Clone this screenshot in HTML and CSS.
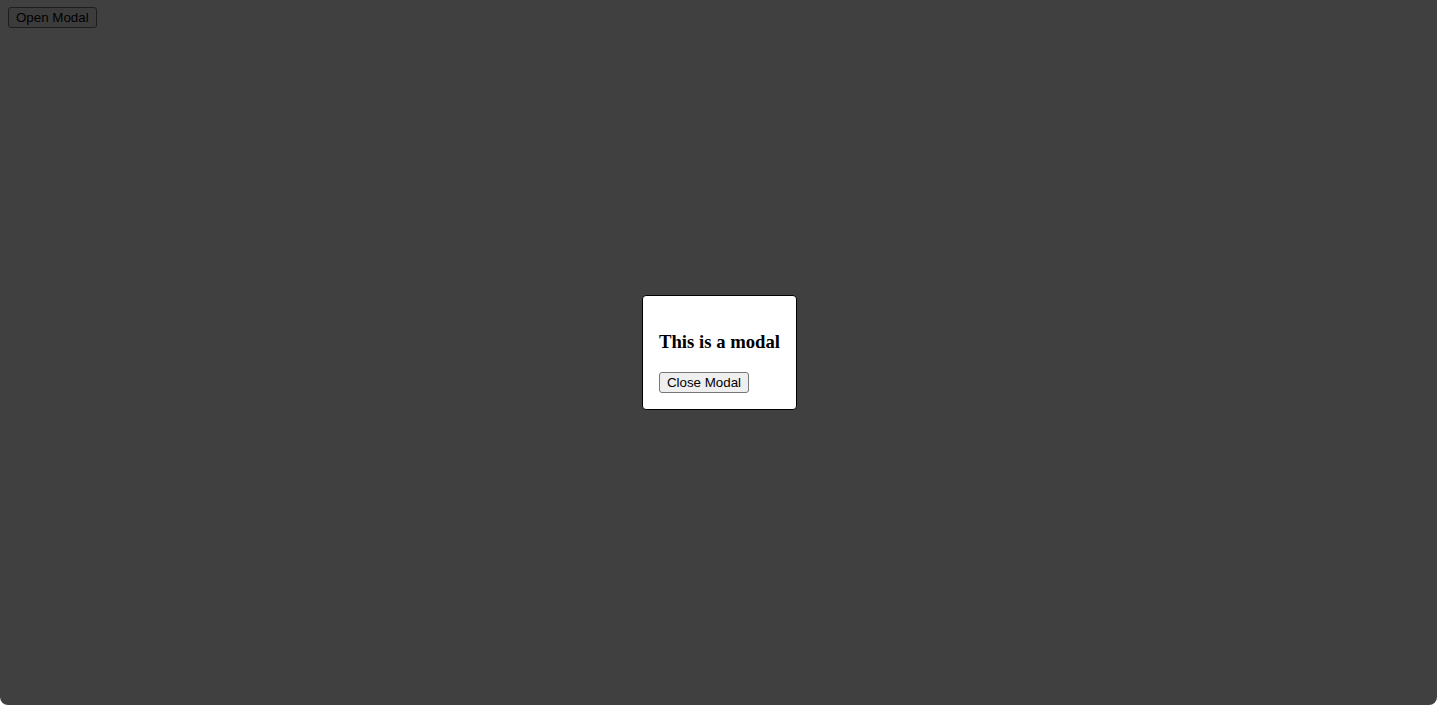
FILE: index.html
```html
<!DOCTYPE html>
<html>
<head>
<meta charset="utf-8">
<link rel="stylesheet" href="styles.css">
</head>
<body>
<button class="btn">Open Modal</button>
<div class="overlay">
  <div class="modal">
    <h3 class="modal-title">This is a modal</h3>
    <button class="btn">Close Modal</button>
  </div>
</div>
</body>
</html>
```
FILE: styles.css
```css
html, body {
  height: 100%;
}
body {
  margin: 7px 8px;
  font-family: "Liberation Serif", "Times New Roman", serif;
  background: #fff;
}
.btn {
  font-family: "Liberation Sans", Arial, sans-serif;
  font-size: 13.33px;
  line-height: 17px;
  color: #000;
  background: #efefef;
  border: 1px solid #767676;
  border-radius: 3px;
  padding: 1px 7px;
  margin: 0;
}
.overlay {
  position: fixed;
  inset: 0;
  padding-left: 2px;
  background: rgba(0, 0, 0, 0.75);
  display: flex;
  align-items: center;
  justify-content: center;
  border-bottom-left-radius: 8px;
  border-bottom-right-radius: 8px;
}
.modal {
  background: #fff;
  border: 1px solid #000;
  border-radius: 4px;
  padding: 16px;
}
.modal-title {
  font-size: 18.72px;
  font-weight: bold;
  margin: 18.72px 0;
}
```
